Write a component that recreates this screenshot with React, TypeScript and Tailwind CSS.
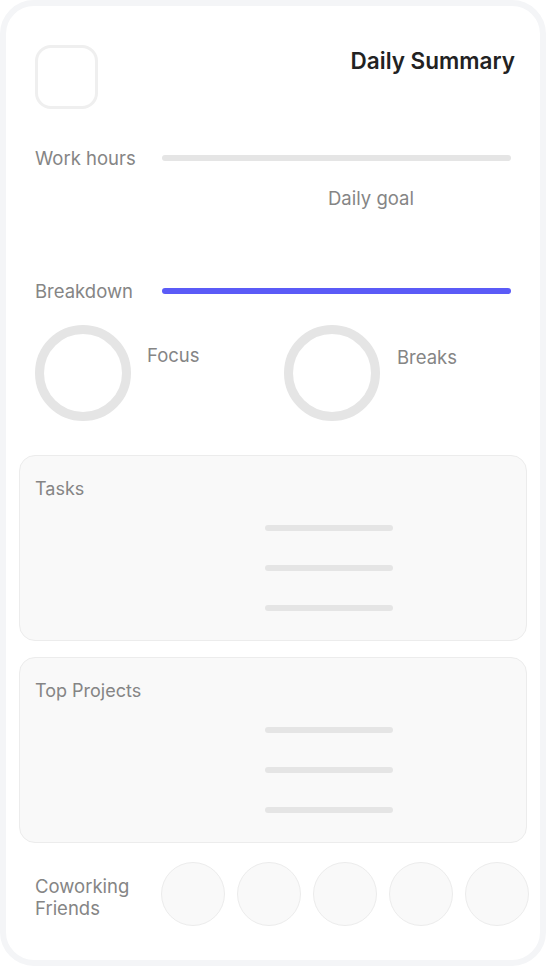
import React from "react";

const font = { fontFamily: "Inter, 'Liberation Sans', sans-serif" };

function Line() {
  return <div className="h-[6px] w-[128px] rounded-full bg-[#e5e5e5]" />;
}

function ListCard({ title }: { title: string }) {
  return (
    <div className="h-[186px] rounded-[16px] border border-[#ececec] bg-[#f9f9f9] px-[15px] pt-[21px]">
      <div className="text-[18px] leading-[24px] text-[#858585]">{title}</div>
      <div className="mt-[24px] flex flex-col gap-[34px] pl-[230px]">
        <Line />
        <Line />
        <Line />
      </div>
    </div>
  );
}

function Ring() {
  return <div className="h-[96px] w-[96px] shrink-0 rounded-full border-[9px] border-[#e5e5e5]" />;
}

export default function App() {
  return (
    <div style={font} className="h-[966px] w-[546px] overflow-hidden bg-white">
      <div className="h-full w-full rounded-[34px] border-[6px] border-[#f4f5f7] bg-white px-[13px] pt-[39px]">
        <div className="flex items-start justify-between pl-4 pr-3">
          <div className="h-[64px] w-[63px] rounded-[16px] border-[3px] border-[#efefef]" />
          <div className="mt-[2px] text-[22.5px] font-semibold leading-[28px] text-[#222]">
            Daily Summary
          </div>
        </div>

        <div className="mt-[37px] flex items-center px-4">
          <div className="w-[127px] text-[18.5px] leading-[24px] text-[#858585]">Work hours</div>
          <div className="h-[6px] flex-1 rounded-full bg-[#e5e5e5]" />
        </div>
        <div className="mt-[16px] pl-[309px] text-[18.5px] leading-[24px] text-[#858585]">Daily goal</div>

        <div className="mt-[69px] flex items-center px-4">
          <div className="w-[127px] text-[18.5px] leading-[24px] text-[#858585]">Breakdown</div>
          <div className="h-[6px] flex-1 rounded-full bg-[#5b5bf7]" />
        </div>

        <div className="mt-[22px] flex px-4">
          <div className="flex w-[249px]">
            <Ring />
            <div className="ml-[16px] mt-[18px] text-[18.5px] leading-[24px] text-[#858585]">Focus</div>
          </div>
          <div className="flex">
            <Ring />
            <div className="ml-[17px] mt-[20px] text-[18.5px] leading-[24px] text-[#858585]">Breaks</div>
          </div>
        </div>

        <div className="mt-[34px] flex flex-col gap-[16px]">
          <ListCard title="Tasks" />
          <ListCard title="Top Projects" />
        </div>

        <div className="mt-[19px] flex items-start px-4">
          <div className="mt-[13px] w-[126px] shrink-0 text-[18.5px] leading-[22px] text-[#858585]">
            Coworking
            <br />
            Friends
          </div>
          <div className="flex gap-[12px]">
            {[0, 1, 2, 3, 4].map((i) => (
              <div key={i} className="h-[64px] w-[64px] shrink-0 rounded-full border border-[#ececec] bg-[#f9f9f9]" />
            ))}
          </div>
        </div>
      </div>
    </div>
  );
}
